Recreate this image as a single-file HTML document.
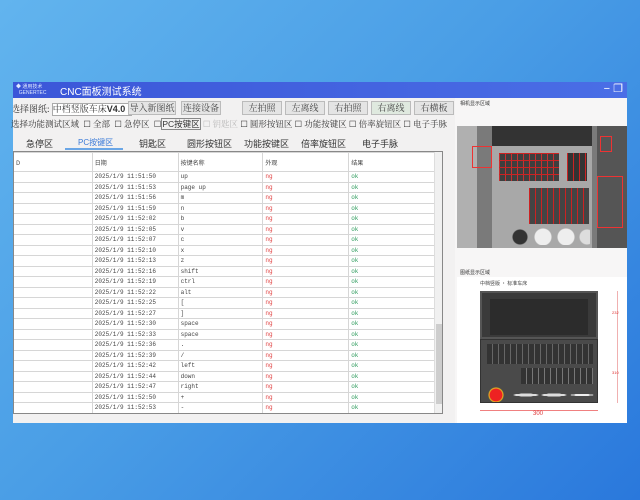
<!DOCTYPE html>
<html><head><meta charset="utf-8"><style>
*{margin:0;padding:0;box-sizing:border-box}
body{width:640px;height:500px;overflow:hidden;background:linear-gradient(135deg,#62b4ee 0%,#4a9ee6 45%,#2a78dc 100%);font-family:"Liberation Sans","Noto Sans CJK SC",sans-serif;position:relative}
.win{position:absolute;left:13px;top:82px;width:614px;height:341px;background:#f2f1f1;overflow:hidden}
.title{position:absolute;left:0;top:0;width:614px;height:16px;background:linear-gradient(90deg,#3b56d8,#4a6ee6);color:#fff;font-size:10px}
.title .logo{position:absolute;left:3px;top:2px;font-size:5px;line-height:6px;color:#dfe8ff}
.title .t{position:absolute;left:47px;top:1px;font-size:10px}
.title .ctl{position:absolute;right:4px;top:0;font-size:11px;color:#fff}
.s{position:absolute;font-size:9px;color:#333;white-space:nowrap;font-family:"Liberation Serif","Noto Serif CJK SC",serif}
.btn{position:absolute;height:14px;top:101px;background:#e4e4e4;border:1px solid #bbb;font-size:9px;color:#444;text-align:center;line-height:12px;font-family:"Liberation Serif","Noto Serif CJK SC",serif}
.btn.g{background:#dfe9df}
.tab{position:absolute;top:137px;font-size:9px;color:#333;font-family:"Liberation Sans","Noto Sans CJK SC",sans-serif}
table{position:absolute;left:0;top:70px;border-collapse:collapse;background:#fff;font-family:"Liberation Mono","Noto Sans CJK SC",monospace;font-size:6px;color:#444}
td{border:1px solid #d6d6d6;height:10.5px;padding-left:2px;vertical-align:middle}
tr.h td{height:19px;font-family:"Noto Sans CJK SC",sans-serif}
.ng{color:#e04040}.ok{color:#2a9a5a}
</style></head><body>
<div class="win">
 <div class="title"><span class="logo">◆ 通用技术<br>&nbsp;&nbsp;GENERTEC</span><span class="t">CNC面板测试系统</span><span class="ctl">− ❐</span></div>
 <div class="s" style="left:-2px;top:20px">选择图纸: <span style="display:inline-block;width:80px;height:13px;border:1px solid #aaa;background:#fff;vertical-align:middle;font-size:9px;line-height:11px">中档竖版车床<b style="font-family:'Liberation Sans'">V4.0</b> ⌄</span></div>
</div>
<div class="btn" style="left:128px;width:48px">导入新图纸</div>
<div class="btn" style="left:181px;width:40px">连接设备</div>
<div class="btn" style="left:242px;width:40px">左拍照</div>
<div class="btn" style="left:285px;width:40px">左离线</div>
<div class="btn" style="left:328px;width:40px">右拍照</div>
<div class="btn g" style="left:371px;width:40px">右离线</div>
<div class="btn" style="left:414px;width:40px">右横板</div>
<div class="s" style="left:11px;top:118px;font-size:8.5px">选择功能测试区域 &nbsp;☐ 全部 &nbsp;☐ 急停区 &nbsp;☐<span style="border:1px solid #888;font-family:'Liberation Sans','Noto Sans CJK SC'">PC按键区</span> <span style="color:#bbb">☐ 钥匙区</span> ☐ 圆形按钮区 ☐ 功能按键区 ☐ 倍率旋钮区 ☐ 电子手脉</div>
<div class="tab" style="left:26px">急停区</div>
<div class="tab" style="left:78px;color:#3a7ad8;font-size:8px">PC按键区</div>
<div style="position:absolute;left:65px;top:148px;width:58px;height:2px;background:#6aa6e6"></div>
<div class="tab" style="left:139px">钥匙区</div>
<div class="tab" style="left:187px">圆形按钮区</div>
<div class="tab" style="left:244px">功能按键区</div>
<div class="tab" style="left:301px">倍率旋钮区</div>
<div class="tab" style="left:362px">电子手脉</div>
<div style="position:absolute;left:13px;top:151px;width:430px;height:263px;border:1px solid #888;background:#fff;overflow:hidden">
<table style="left:-1px;top:0;width:423px">
<colgroup><col style="width:79px"><col style="width:86px"><col style="width:85px"><col style="width:86px"><col style="width:87px"></colgroup>
<tr class="h"><td>D</td><td>日期</td><td>按键名称</td><td>外观</td><td>结果</td></tr>
<tr><td></td><td>2025/1/9 11:51:50</td><td>up</td><td class="ng">ng</td><td class="ok">ok</td></tr>
<tr><td></td><td>2025/1/9 11:51:53</td><td>page up</td><td class="ng">ng</td><td class="ok">ok</td></tr>
<tr><td></td><td>2025/1/9 11:51:56</td><td>m</td><td class="ng">ng</td><td class="ok">ok</td></tr>
<tr><td></td><td>2025/1/9 11:51:59</td><td>n</td><td class="ng">ng</td><td class="ok">ok</td></tr>
<tr><td></td><td>2025/1/9 11:52:02</td><td>b</td><td class="ng">ng</td><td class="ok">ok</td></tr>
<tr><td></td><td>2025/1/9 11:52:05</td><td>v</td><td class="ng">ng</td><td class="ok">ok</td></tr>
<tr><td></td><td>2025/1/9 11:52:07</td><td>c</td><td class="ng">ng</td><td class="ok">ok</td></tr>
<tr><td></td><td>2025/1/9 11:52:10</td><td>x</td><td class="ng">ng</td><td class="ok">ok</td></tr>
<tr><td></td><td>2025/1/9 11:52:13</td><td>z</td><td class="ng">ng</td><td class="ok">ok</td></tr>
<tr><td></td><td>2025/1/9 11:52:16</td><td>shift</td><td class="ng">ng</td><td class="ok">ok</td></tr>
<tr><td></td><td>2025/1/9 11:52:19</td><td>ctrl</td><td class="ng">ng</td><td class="ok">ok</td></tr>
<tr><td></td><td>2025/1/9 11:52:22</td><td>alt</td><td class="ng">ng</td><td class="ok">ok</td></tr>
<tr><td></td><td>2025/1/9 11:52:25</td><td>[</td><td class="ng">ng</td><td class="ok">ok</td></tr>
<tr><td></td><td>2025/1/9 11:52:27</td><td>]</td><td class="ng">ng</td><td class="ok">ok</td></tr>
<tr><td></td><td>2025/1/9 11:52:30</td><td>space</td><td class="ng">ng</td><td class="ok">ok</td></tr>
<tr><td></td><td>2025/1/9 11:52:33</td><td>space</td><td class="ng">ng</td><td class="ok">ok</td></tr>
<tr><td></td><td>2025/1/9 11:52:36</td><td>.</td><td class="ng">ng</td><td class="ok">ok</td></tr>
<tr><td></td><td>2025/1/9 11:52:39</td><td>/</td><td class="ng">ng</td><td class="ok">ok</td></tr>
<tr><td></td><td>2025/1/9 11:52:42</td><td>left</td><td class="ng">ng</td><td class="ok">ok</td></tr>
<tr><td></td><td>2025/1/9 11:52:44</td><td>down</td><td class="ng">ng</td><td class="ok">ok</td></tr>
<tr><td></td><td>2025/1/9 11:52:47</td><td>right</td><td class="ng">ng</td><td class="ok">ok</td></tr>
<tr><td></td><td>2025/1/9 11:52:50</td><td>+</td><td class="ng">ng</td><td class="ok">ok</td></tr>
<tr><td></td><td>2025/1/9 11:52:53</td><td>-</td><td class="ng">ng</td><td class="ok">ok</td></tr>
</table>
<div style="position:absolute;right:0;top:0;width:8px;height:261px;background:#f0f0f0;border-left:1px solid #ddd"><div style="position:absolute;left:1px;top:172px;width:6px;height:80px;background:#cdcdcd"></div></div>
</div>
<!-- right panel -->
<div style="position:absolute;left:455px;top:98px;width:172px;height:325px;background:#f7f6f6"></div>
<div style="position:absolute;left:460px;top:100px;font-size:5px;color:#333;font-family:'Noto Sans CJK SC',sans-serif">相机显示区域</div>
<div style="position:absolute;left:457px;top:126px;width:170px;height:122px;background:#7a7a7a">
 <div style="position:absolute;left:0;top:0;width:20px;height:122px;background:#b0b0b0"></div>
 <div style="position:absolute;left:35px;top:0;width:100px;height:122px;background:#a8a8a8"></div>
 <div style="position:absolute;left:35px;top:0;width:100px;height:20px;background:#333"></div>
 <div style="position:absolute;left:42px;top:27px;width:60px;height:28px;background:repeating-linear-gradient(90deg,#c22 0 1px,#333 1px 6px),#333;opacity:.9"></div>
 <div style="position:absolute;left:42px;top:27px;width:60px;height:28px;background:repeating-linear-gradient(0deg,transparent 0 6px,#c22 6px 7px)"></div>
 <div style="position:absolute;left:110px;top:27px;width:20px;height:28px;background:repeating-linear-gradient(90deg,#c22 0 1px,#333 1px 6px)"></div>
 <div style="position:absolute;left:72px;top:62px;width:60px;height:36px;background:repeating-linear-gradient(90deg,#c22 0 1px,#444 1px 6px)"></div>
 <div style="position:absolute;left:53px;top:102px;width:80px;height:17px;background:radial-gradient(circle at 10px 9px,#333 7px,transparent 8px),radial-gradient(circle at 33px 9px,#eee 8px,transparent 9px),radial-gradient(circle at 56px 9px,#eee 8px,transparent 9px),radial-gradient(circle at 77px 9px,#ddd 7px,transparent 8px)"></div>
 <div style="position:absolute;left:140px;top:0;width:30px;height:122px;background:#555"></div>
 <div style="position:absolute;left:15px;top:20px;width:20px;height:22px;border:1px solid #e33"></div>
 <div style="position:absolute;left:143px;top:10px;width:12px;height:16px;border:1px solid #e33"></div>
 <div style="position:absolute;left:140px;top:50px;width:26px;height:52px;border:1px solid #e33"></div>
</div>
<div style="position:absolute;left:460px;top:269px;font-size:5px;color:#333;font-family:'Noto Sans CJK SC',sans-serif">图纸显示区域</div>
<div style="position:absolute;left:457px;top:277px;width:170px;height:146px;background:#fff">
 <div style="position:absolute;left:23px;top:3px;font-size:5px;color:#444;font-family:'Noto Sans CJK SC',sans-serif">中档竖版 · 标准车床</div>
 <div style="position:absolute;left:23px;top:14px;width:118px;height:48px;background:#3a3a3a;border:2px solid #555"><div style="position:absolute;left:8px;top:6px;width:98px;height:36px;background:#2c2c2c"></div></div>
 <div style="position:absolute;left:23px;top:62px;width:118px;height:64px;background:#4a4a4a;border:1px solid #333">
  <div style="position:absolute;left:6px;top:4px;width:106px;height:20px;background:repeating-linear-gradient(90deg,#333 0 5px,#666 5px 6px)"></div>
  <div style="position:absolute;left:40px;top:28px;width:72px;height:16px;background:repeating-linear-gradient(90deg,#333 0 5px,#777 5px 6px)"></div>
  <div style="position:absolute;left:5px;top:47px;width:110px;height:15px;background:radial-gradient(circle at 10px 8px,#e22 6px,#e8c020 7px,transparent 8px),radial-gradient(ellipse at 40px 8px,#ddd 12px,transparent 13px),radial-gradient(ellipse at 68px 8px,#ddd 12px,transparent 13px),radial-gradient(ellipse at 96px 8px,#eee 11px,transparent 12px)"></div>
 </div>
 <div style="position:absolute;left:23px;top:133px;width:118px;height:1px;background:#f08080"></div>
 <div style="position:absolute;left:76px;top:134px;font-size:6px;color:#d33">300</div>
 <div style="position:absolute;left:160px;top:14px;width:1px;height:112px;background:#f0b0b0"></div>
 <div style="position:absolute;left:155px;top:33px;font-size:4px;color:#d33">232</div>
 <div style="position:absolute;left:155px;top:93px;font-size:4px;color:#d33">310</div>
</div>
</body></html>
